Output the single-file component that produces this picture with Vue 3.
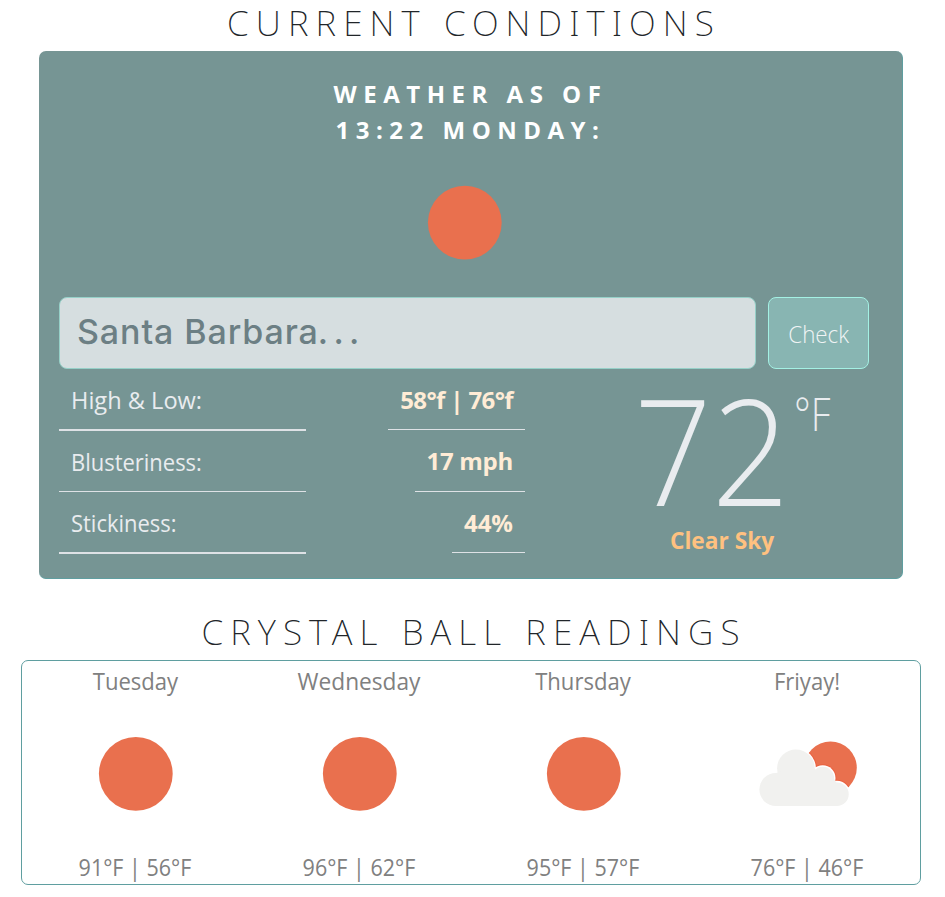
<script setup>
const readings = [
  { label: 'High & Low:', value: '58°f | 76°f' },
  { label: 'Blusteriness:', value: '17 mph' },
  { label: 'Stickiness:', value: '44%' },
]
const days = [
  { name: 'Tuesday', temps: '91°F | 56°F', icon: 'sun' },
  { name: 'Wednesday', temps: '96°F | 62°F', icon: 'sun' },
  { name: 'Thursday', temps: '95°F | 57°F', icon: 'sun' },
  { name: 'Friyay!', temps: '76°F | 46°F', icon: 'cloud' },
]
</script>

<template>
  <main class="page">
    <h1 class="title title-now"><span>CURRENT CONDITIONS</span></h1>
    <section class="current">
      <h2 class="asof">
        <span>WEATHER AS OF</span>
        <span>13:22 MONDAY:</span>
      </h2>
      <svg class="icon" viewBox="0 0 100 100"><circle cx="49.8" cy="49.6" r="36.9" fill="#e9704e" /></svg>
      <form class="search" @submit.prevent>
        <label class="field">
          <input class="city" type="text" />
          <span class="hint"><span class="place">Santa Barbara</span><span class="dots">. . .</span></span>
        </label>
        <button class="check" type="submit"><span>Check</span></button>
      </form>
      <div class="details">
        <ul class="labels">
          <li v-for="r in readings" :key="r.label"><span>{{ r.label }}</span></li>
        </ul>
        <ul class="values">
          <li v-for="r in readings" :key="r.label"><span>{{ r.value }}</span></li>
        </ul>
        <div class="now">
          <div class="temp"><span class="deg">72</span><span class="unit">°F</span></div>
          <div class="sky">Clear Sky</div>
        </div>
      </div>
    </section>

    <h1 class="title title-next"><span>CRYSTAL BALL READINGS</span></h1>
    <section class="forecast">
      <article v-for="d in days" :key="d.name" class="day">
        <div class="name">{{ d.name }}</div>
        <svg class="icon" viewBox="0 0 100 100">
          <circle v-if="d.icon === 'sun'" cx="49.8" cy="49.8" r="36.9" fill="#e9704e" />
          <g v-else>
            <circle cx="72.5" cy="43.8" r="26.3" fill="#e9704e" />
            <g fill="#ea6240">
              <circle cx="64.7" cy="54" r="13.8" clip-path="url(#sun-disc)" />
              <circle cx="78.9" cy="70" r="14.2" clip-path="url(#sun-disc)" />
              <circle cx="37.9" cy="44.3" r="21" clip-path="url(#sun-disc)" />
            </g>
            <clipPath id="sun-disc"><circle cx="72.5" cy="43.8" r="26.3" /></clipPath>
            <g fill="#fff">
              <circle cx="37.9" cy="44.3" r="20" />
              <circle cx="64.7" cy="54" r="12.8" />
              <circle cx="78.9" cy="70" r="13.2" />
            </g>
            <g fill="#f1f1ef">
              <circle cx="17.9" cy="65.5" r="16.5" />
              <circle cx="37.9" cy="44.3" r="18.8" />
              <circle cx="64.7" cy="54.2" r="11.4" />
              <circle cx="78.9" cy="70.2" r="11.8" />
              <path d="M18 49L39 44H56L65 54L75.5 54L79 60V82H18Z" />
            </g>
          </g>
        </svg>
        <div class="temps">{{ d.temps }}</div>
      </article>
    </section>
  </main>
</template>

<style>
body { background: #fff; overflow: hidden; }
</style>

<style scoped>
* { box-sizing: border-box; }
.page { width: 945px; height: 897px; font-family: "Open Sans", "Noto Sans", sans-serif; font-size: 24px; }
.title { margin: 0; height: 45px; line-height: 45px; font-family: "Noto Sans", sans-serif; font-size: 35px; font-weight: 200; color: #212529; text-align: center; white-space: nowrap; letter-spacing: 7.1px; word-spacing: 1px; padding-left: 3px; }
.current { width: 864px; height: 528px; margin: 6px 0 0 39px; padding: 25px 20px 0; border: 1px solid #5f9ea0; border-width: 0 1px 1px 0; border-radius: 7px; background: #769594; }
.asof { margin: 0; display: flex; flex-direction: column; align-items: center; font-size: 24px; font-weight: 700; line-height: 36px; letter-spacing: 6.5px; color: #fff; }
.current > .icon { display: block; width: 100px; height: 100px; margin: 24.5px 0 24.5px 356px; }
.search { display: flex; gap: 12px; height: 72px; }
.field { display: grid; width: 697px; height: 72px; }
.field > * { grid-area: 1 / 1; }
.city { width: 697px; height: 72px; border: 1px solid #96d0c8; border-radius: 8px; background: #d6dee0; outline: none; }
.hint { padding-left: 18px; line-height: 70px; font-family: Inter, sans-serif; font-weight: 500; font-size: 34px; letter-spacing: 0.9px; color: #6c7f84; white-space: nowrap; pointer-events: none; }
.dots { margin-left: -1px; letter-spacing: 0; word-spacing: -3.4px; }
.check { width: 101px; height: 72px; padding: 1px 0 0; border: 1px solid #a4f1e4; border-radius: 8px; background: #88b5b2; color: #f0f4f5; font: 300 24px "Open Sans", sans-serif; }
.check span { display: inline-block; transform: scaleX(0.93); }
.details { display: flex; }
ul { margin: 0; padding: 0; list-style: none; flex-shrink: 0; }
.labels { width: 247px; color: #e9ecef; }
.labels li { height: 62px; padding: 13px 12px 0; line-height: 36px; border-bottom: 2px solid #dee2e6; }
.labels li:nth-child(2) { height: 61px; border-bottom-width: 1px; }
.labels span { display: inline-block; transform-origin: left; transform: scaleX(0.915); }
.labels li:first-child span { transform: scaleX(0.983); }
.values { width: 219px; display: flex; flex-direction: column; align-items: flex-end; font-weight: 700; color: #ffecd6; }
.values li { height: 61px; padding: 13px 12px 0; line-height: 36px; border-bottom: 1px solid #dee2e6; }
.values li:first-child { letter-spacing: -0.63px; }
.values li:nth-child(2) { height: 62px; letter-spacing: -0.3px; }
.now { width: 350px; padding-left: 109px; }
.temp { display: flex; height: 154px; padding-top: 6px; color: #e9ecef; font-weight: 300; }
.deg { width: 160px; font-size: 147px; line-height: 148px; transform-origin: left; transform: scaleX(0.927); }
.unit { font-size: 46px; line-height: 76px; transform-origin: left; transform: scaleX(0.85); }
.sky { padding-left: 36px; font-weight: 700; line-height: 33px; color: #ffc180; transform-origin: 36px 50%; transform: scaleX(0.945); }
.title-next { margin-top: 30px; }
.forecast { width: 900px; height: 225px; margin: 6px 0 0 21px; padding: 2px 1px 0; border: 1px solid #5f9ea0; border-radius: 7px; display: grid; grid-template-columns: repeat(4, 224px); color: #808080; }
.day { display: flex; flex-direction: column; align-items: center; }
.name { line-height: 36px; white-space: nowrap; transform: scaleX(0.92); }
.day:nth-child(2) .name { transform: scaleX(0.945); }
.forecast .icon { width: 100px; height: 100px; margin: 25px 0 24px 1px; }
.temps { line-height: 37px; white-space: nowrap; transform: scaleX(0.895); }
</style>
